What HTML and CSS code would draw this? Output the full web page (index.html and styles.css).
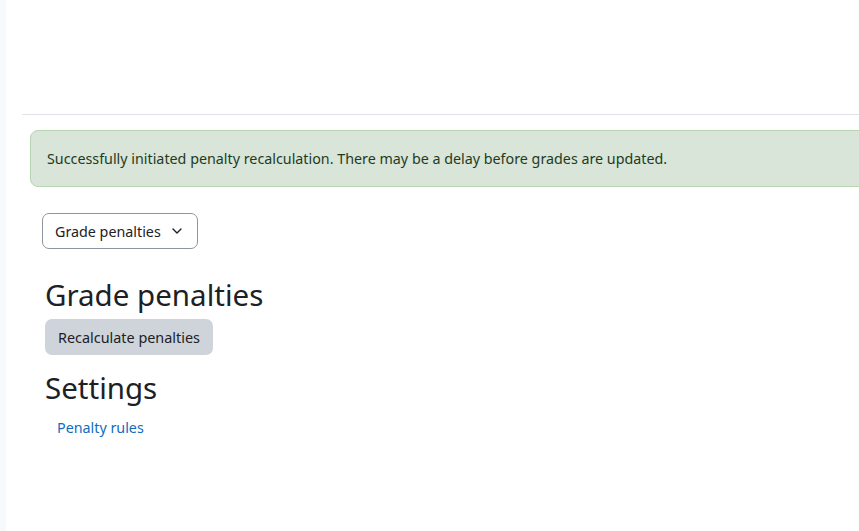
FILE: index.html
```html
<!DOCTYPE html>
<html lang="en">
<head>
<meta charset="utf-8">
<title>Grade penalties</title>
<link rel="stylesheet" href="styles.css">
</head>
<body>
<div class="page">
  <div class="drawer"></div>
  <div class="main">
    <div class="header"></div>
    <div class="content">
      <div class="alert">Successfully initiated penalty recalculation. There may be a delay before grades are updated.</div>
      <div class="region">
        <button class="select" type="button">Grade penalties
          <svg class="chev" width="12" height="12" viewBox="0 0 12 12"><path d="M2 4l4 4 4-4" fill="none" stroke="#1d2125" stroke-width="1.4" stroke-linecap="round" stroke-linejoin="round"/></svg>
        </button>
        <h2 class="title">Grade penalties</h2>
        <button class="btn" type="button">Recalculate penalties</button>
        <h2 class="title settings">Settings</h2>
        <a class="link" href="#">Penalty rules</a>
      </div>
    </div>
  </div>
</div>
</body>
</html>
```
FILE: styles.css
```css
html, body {
  margin: 0;
  padding: 0;
  background: #fff;
  overflow: hidden;
}
body {
  font-family: "Noto Sans", "Open Sans", sans-serif;
  color: #1d2125;
}
.page {
  display: flex;
  min-height: 531px;
}
.drawer {
  width: 6px;
  flex: 0 0 6px;
  background: #f8f9fa;
}
.main {
  flex: 1;
  padding-left: 16px;
  min-width: 0;
  overflow: hidden;
}
.header {
  height: 114px;
  border-bottom: 1px solid #dee2e6;
}
.content {
  padding-left: 8px;
  padding-top: 15px;
}
.alert {
  margin-right: -12px;
  height: 57px;
  box-sizing: border-box;
  display: flex;
  align-items: center;
  padding: 0 16px;
  background: #d8e5d8;
  border: 1px solid #b5d6b0;
  border-radius: 8px;
  color: #1f3a1e;
  font-size: 14.3px;
}
.region {
  padding-left: 12px;
  padding-top: 26px;
}
.select {
  display: inline-flex;
  align-items: center;
  gap: 10px;
  height: 36px;
  box-sizing: border-box;
  padding: 0 14px 0 12px;
  background: #fff;
  border: 1px solid #8f959e;
  border-radius: 7px;
  font-family: inherit;
  font-size: 14.3px;
  color: #1d2125;
}
.chev { display: block; }
.title {
  margin: 28px 0 0 3px;
  font-weight: 400;
  font-size: 29.5px;
  line-height: 1.2;
  color: #1d2125;
}
.btn {
  display: block;
  margin: 7px 0 0 3px;
  height: 36px;
  padding: 0 13px;
  background: #ced4da;
  border: none;
  border-radius: 7px;
  font-family: inherit;
  font-size: 14.4px;
  color: #1d2125;
}
.settings { margin-top: 15px; }
.link {
  display: inline-block;
  margin: 12px 0 0 15px;
  font-size: 14.3px;
  color: #0f6cbf;
  text-decoration: none;
}
```
